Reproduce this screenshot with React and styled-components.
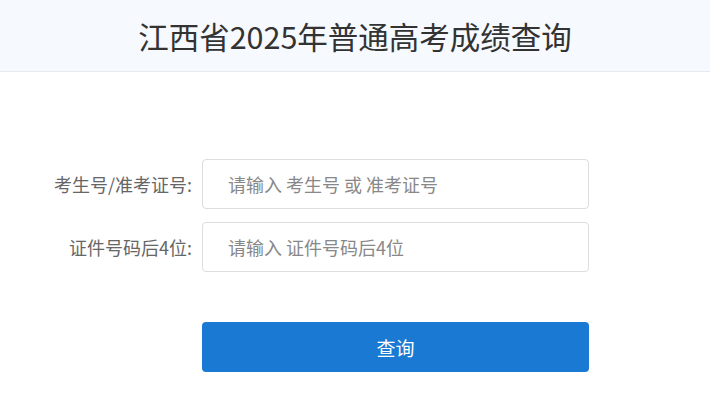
import styled, { createGlobalStyle } from "styled-components";

const GlobalStyle = createGlobalStyle`
    body {
        margin: 0;
        background: #FFFFFF;
        font-family: "Noto Sans CJK SC", "Noto Sans", sans-serif;
    }
`;

function App() {
    return (
        <>
            <GlobalStyle />
            <Header>
                <h1>江西省2025年普通高考成绩查询</h1>
            </Header>
            <Form onSubmit={(e) => e.preventDefault()}>
                <Row>
                    <Label>考生号/准考证号:</Label>
                    <Input placeholder="请输入 考生号 或 准考证号" />
                </Row>
                <Row>
                    <Label>证件号码后4位:</Label>
                    <Input placeholder="请输入 证件号码后4位" />
                </Row>
                <Actions>
                    <Button type="submit">查询</Button>
                </Actions>
            </Form>
        </>
    );
}

const Header = styled.header`
    height: 71px;
    background: #F6F9FD;
    border-bottom: 1px solid #E6EAF0;
    display: flex;
    justify-content: center;
    align-items: center;

    h1 {
        margin: 0;
        font-size: 30.5px;
        font-weight: 400;
        color: #333333;
    }
`;

const Form = styled.form`
    padding-top: 87px;
    display: flex;
    flex-direction: column;
    gap: 13px;
`;

const Row = styled.div`
    display: grid;
    grid-template-columns: 202px 387px;
    align-items: center;
`;

const Label = styled.label`
    padding-right: 10px;
    text-align: right;
    font-size: 18px;
    color: #666666;
`;

const Input = styled.input`
    box-sizing: border-box;
    height: 50px;
    width: 387px;
    padding: 0 25px;
    border: 1px solid #DDDDDD;
    border-radius: 4px;
    font-family: inherit;
    font-size: 18px;
    color: #333333;
    outline: none;

    &::placeholder {
        color: #888888;
    }
`;

const Actions = styled.div`
    padding-left: 202px;
    margin-top: 37px;
`;

const Button = styled.button`
    width: 387px;
    height: 50px;
    border: none;
    border-radius: 4px;
    background: #1979D3;
    color: #FFFFFF;
    font-family: inherit;
    font-size: 19px;
    cursor: pointer;
`;

export default App;
